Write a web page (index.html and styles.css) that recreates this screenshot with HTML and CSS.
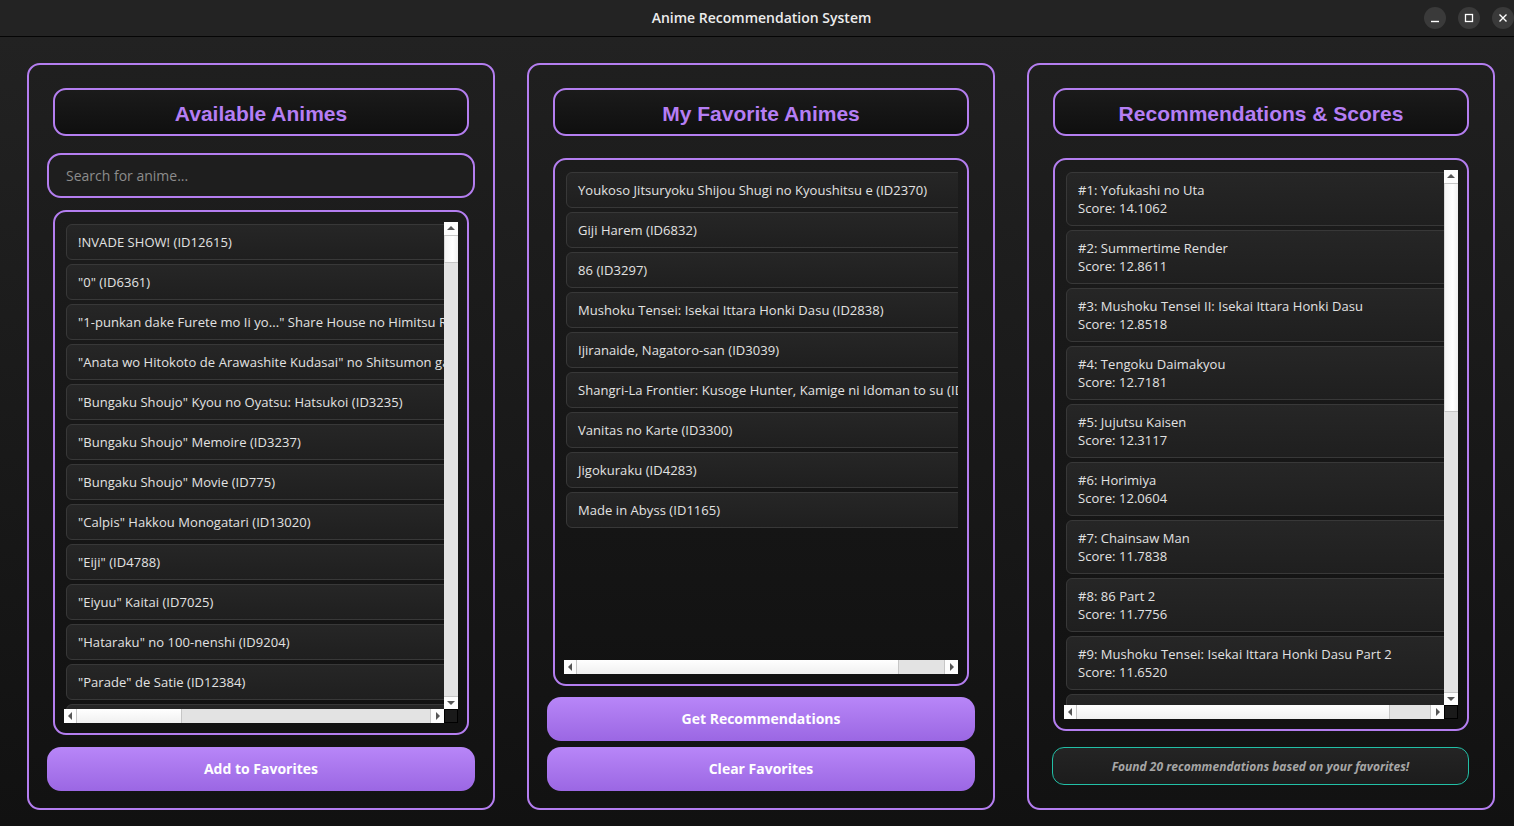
FILE: index.html
```html
<!DOCTYPE html>
<html>
<head>
<meta charset="utf-8">
<title>Anime Recommendation System</title>
<link rel="stylesheet" href="styles.css">
</head>
<body>
<header class="titlebar">
  <div class="title">Anime Recommendation System</div>
  <div class="winctl">
    <span class="wbtn"><svg width="10" height="10" viewBox="0 0 10 10"><path d="M1 8.5h8" stroke="#fff" stroke-width="1.4"/></svg></span>
    <span class="wbtn"><svg width="10" height="10" viewBox="0 0 10 10"><rect x="1.5" y="1.5" width="7" height="7" fill="none" stroke="#fff" stroke-width="1.3"/></svg></span>
    <span class="wbtn"><svg width="10" height="10" viewBox="0 0 10 10"><path d="M1.5 1.5l7 7M8.5 1.5l-7 7" stroke="#fff" stroke-width="1.4"/></svg></span>
  </div>
</header>
<main class="main">
  <section class="panel">
    <div class="phead">Available Animes</div>
    <div class="search">Search for anime...</div>
    <div class="listbox lb-left">
      <div class="viewport">
        <div class="item">!NVADE SHOW! (ID12615)</div>
        <div class="item">"0" (ID6361)</div>
        <div class="item">"1-punkan dake Furete mo Ii yo..." Share House no Himitsu Rule (ID11620)</div>
        <div class="item">"Anata wo Hitokoto de Arawashite Kudasai" no Shitsumon ga Kita node (ID10345)</div>
        <div class="item">"Bungaku Shoujo" Kyou no Oyatsu: Hatsukoi (ID3235)</div>
        <div class="item">"Bungaku Shoujo" Memoire (ID3237)</div>
        <div class="item">"Bungaku Shoujo" Movie (ID775)</div>
        <div class="item">"Calpis" Hakkou Monogatari (ID13020)</div>
        <div class="item">"Eiji" (ID4788)</div>
        <div class="item">"Eiyuu" Kaitai (ID7025)</div>
        <div class="item">"Hataraku" no 100-nenshi (ID9204)</div>
        <div class="item">"Parade" de Satie (ID12384)</div>
        <div class="item">"Sci-Fi Harry" (ID4521)</div>
      </div>
      <div class="vscroll">
        <span class="abtn up"></span>
        <span class="vthumb thumb-left"></span>
        <span class="vtrack"></span>
        <span class="abtn down"></span>
      </div>
      <div class="hscroll">
        <span class="abtn left"></span>
        <span class="hthumb" style="width:105px"></span>
        <span class="htrack"></span>
        <span class="abtn right"></span>
      </div>
      <div class="corner"></div>
    </div>
    <button class="pbtn btn-add">Add to Favorites</button>
  </section>

  <section class="panel">
    <div class="phead">My Favorite Animes</div>
    <div class="listbox lb-mid">
      <div class="viewport">
        <div class="item">Youkoso Jitsuryoku Shijou Shugi no Kyoushitsu e (ID2370)</div>
        <div class="item">Giji Harem (ID6832)</div>
        <div class="item">86 (ID3297)</div>
        <div class="item">Mushoku Tensei: Isekai Ittara Honki Dasu (ID2838)</div>
        <div class="item">Ijiranaide, Nagatoro-san (ID3039)</div>
        <div class="item">Shangri-La Frontier: Kusoge Hunter, Kamige ni Idoman to su (ID4120)</div>
        <div class="item">Vanitas no Karte (ID3300)</div>
        <div class="item">Jigokuraku (ID4283)</div>
        <div class="item">Made in Abyss (ID1165)</div>
      </div>
      <div class="hscroll">
        <span class="abtn left"></span>
        <span class="hthumb" style="width:322px"></span>
        <span class="htrack"></span>
        <span class="abtn right"></span>
      </div>
    </div>
    <button class="pbtn btn-get">Get Recommendations</button>
    <button class="pbtn btn-clear">Clear Favorites</button>
  </section>

  <section class="panel">
    <div class="phead">Recommendations &amp; Scores</div>
    <div class="listbox lb-right">
      <div class="viewport">
        <div class="item rec">#1: Yofukashi no Uta<br>Score: 14.1062</div>
        <div class="item rec">#2: Summertime Render<br>Score: 12.8611</div>
        <div class="item rec">#3: Mushoku Tensei II: Isekai Ittara Honki Dasu<br>Score: 12.8518</div>
        <div class="item rec">#4: Tengoku Daimakyou<br>Score: 12.7181</div>
        <div class="item rec">#5: Jujutsu Kaisen<br>Score: 12.3117</div>
        <div class="item rec">#6: Horimiya<br>Score: 12.0604</div>
        <div class="item rec">#7: Chainsaw Man<br>Score: 11.7838</div>
        <div class="item rec">#8: 86 Part 2<br>Score: 11.7756</div>
        <div class="item rec">#9: Mushoku Tensei: Isekai Ittara Honki Dasu Part 2<br>Score: 11.6520</div>
        <div class="item rec">#10: Kimetsu no Yaiba<br>Score: 11.5012</div>
      </div>
      <div class="vscroll">
        <span class="abtn up"></span>
        <span class="vthumb thumb-right"></span>
        <span class="vtrack"></span>
        <span class="abtn down"></span>
      </div>
      <div class="hscroll">
        <span class="abtn left"></span>
        <span class="hthumb" style="width:313px"></span>
        <span class="htrack"></span>
        <span class="abtn right"></span>
      </div>
      <div class="corner"></div>
    </div>
    <div class="status">Found 20 recommendations based on your favorites!</div>
  </section>
</main>
</body>
</html>
```

FILE: styles.css
```css
* { box-sizing: border-box; }
html, body { margin: 0; padding: 0; }
body {
  width: 1514px;
  height: 826px;
  overflow: hidden;
  background: #1c1c1c;
  font-family: "Open Sans", "Noto Sans", sans-serif;
  color: #e4e4e4;
}

.titlebar {
  height: 37px;
  background: #232323;
  border-bottom: 1px solid #050505;
  position: relative;
  display: flex;
  align-items: center;
  justify-content: center;
  padding-left: 9px;
}
.title {
  font-size: 14px;
  font-weight: 600;
  color: #ececec;
  margin-top: -1px;
}
.winctl {
  position: absolute;
  right: 0;
  top: 7px;
  display: flex;
  gap: 12px;
}
.wbtn {
  width: 22px;
  height: 22px;
  border-radius: 50%;
  background: #3a3a3a;
  display: flex;
  align-items: center;
  justify-content: center;
}

.main {
  height: 789px;
  padding: 26px 19px 16px 27px;
  display: flex;
  gap: 32px;
  background: linear-gradient(#222222, #111111);
}

.panel {
  width: 468px;
  height: 747px;
  border: 2px solid #b47ef0;
  border-radius: 13px;
  background: linear-gradient(#1f1f1f, #121212);
  display: flex;
  flex-direction: column;
  padding: 23px 0 17px;
}

.phead {
  height: 48px;
  margin: 0 24px;
  border: 2px solid #b47ef0;
  border-radius: 13px;
  background: linear-gradient(#1b1b1b, #0f0f0f);
  color: #b57ef4;
  font-family: "Liberation Sans", Arial, sans-serif;
  font-weight: bold;
  font-size: 21px;
  display: flex;
  align-items: center;
  justify-content: center;
  padding-top: 3px;
}

.search {
  height: 45px;
  margin: 17px 18px 0;
  border: 2px solid #b47ef0;
  border-radius: 14px;
  background: #1e1e1e;
  color: #8c8c8c;
  font-size: 14px;
  display: flex;
  align-items: center;
  padding: 0 0 1px 17px;
}

.listbox {
  margin: 12px 24px 0;
  flex: 1;
  border: 2px solid #b47ef0;
  border-radius: 13px;
  background: linear-gradient(#1c1c1c, #121212);
  padding: 10px 9px 10px 9px;
  display: grid;
  grid-template-columns: 1fr 14px;
  grid-template-rows: 1fr 14px;
  min-height: 0;
}
.lb-mid, .lb-right { margin-top: 22px; }
.lb-mid { grid-template-columns: 1fr; }

.viewport {
  overflow: hidden;
  padding: 2px 0 0 2px;
  display: flex;
  flex-direction: column;
  gap: 4px;
  min-height: 0;
}
.item {
  flex: none;
  width: 560px;
  height: 36px;
  white-space: nowrap;
  padding: 8px 11px;
  line-height: 18px;
  font-size: 13px;
  letter-spacing: 0.05px;
  color: #e2e2e2;
  background: linear-gradient(#262626, #1f1f1f);
  border: 1px solid #383838;
  border-radius: 6px;
}
.item.rec { height: 54px; }

.vscroll {
  display: flex;
  flex-direction: column;
  background: #e3e3e3;
}
.vtrack, .htrack { flex: 1; background: #e3e3e3; }
.vthumb {
  background: linear-gradient(90deg, #f4f4f4, #ffffff 60%, #f0f0f0);
  border-bottom: 1px solid #c6c6c6;
  border-left: 1px solid #d8d8d8;
}
.thumb-left { height: 27px; }
.thumb-right { height: 228px; }

.hscroll {
  display: flex;
  background: #e3e3e3;
}
.hthumb {
  background: linear-gradient(#ffffff, #f0f0f0);
  border-right: 1px solid #c6c6c6;
}

.abtn {
  flex: none;
  width: 14px;
  height: 14px;
  background: #fdfdfd;
  position: relative;
}
.abtn.up { border-bottom: 1px solid #c6c6c6; }
.abtn.down { border-top: 1px solid #c6c6c6; height: 13px; }
.abtn.left { width: 13px; border-right: 1px solid #c6c6c6; }
.abtn.right { border-left: 1px solid #c6c6c6; }
.abtn::after {
  content: "";
  position: absolute;
  width: 0;
  height: 0;
}
.abtn.up::after {
  left: 3px; top: 4px;
  border-left: 4px solid transparent;
  border-right: 4px solid transparent;
  border-bottom: 4px solid #555;
}
.abtn.down::after {
  left: 3px; top: 4px;
  border-left: 4px solid transparent;
  border-right: 4px solid transparent;
  border-top: 4px solid #555;
}
.abtn.left::after {
  left: 4px; top: 3px;
  border-top: 4px solid transparent;
  border-bottom: 4px solid transparent;
  border-right: 4px solid #555;
}
.abtn.right::after {
  left: 5px; top: 3px;
  border-top: 4px solid transparent;
  border-bottom: 4px solid transparent;
  border-left: 4px solid #555;
}

.corner {
  background: #1a1a1a;
  border: 1px solid #000;
}

.pbtn {
  flex: none;
  height: 44px;
  margin: 12px 18px 0;
  border: none;
  border-radius: 14px;
  background: linear-gradient(#b886f8, #9b67e3);
  color: #fff;
  font-family: "Open Sans", "Noto Sans", sans-serif;
  font-weight: bold;
  font-size: 14px;
  padding: 0 0 1px;
}
.btn-get { margin-top: 11px; }
.btn-clear { margin-top: 6px; }

.status {
  flex: none;
  height: 38px;
  margin: 16px 24px 6px 23px;
  border: 1px solid #22bfa6;
  border-radius: 12px;
  background: linear-gradient(#242424, #1c1c1c);
  color: #a6a6a6;
  font-size: 12px;
  font-weight: bold;
  font-style: italic;
  display: flex;
  align-items: center;
  justify-content: center;
}
```
